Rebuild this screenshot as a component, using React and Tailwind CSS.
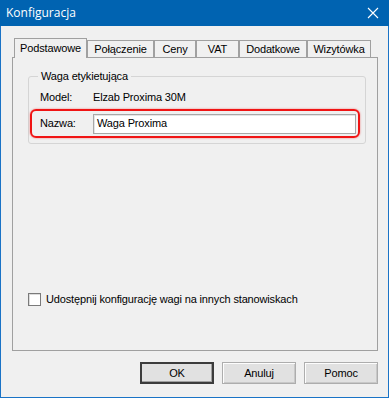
import React from "react";

const font = { fontFamily: '"Liberation Sans", Arial, sans-serif', letterSpacing: "-0.15px" };

function Tab({ label, w, selected }) {
  return (
    <div
      className={
        "flex items-center justify-center border border-b-0 border-[#a0a0a0] bg-[#f0f0f0] text-[11px] text-black " +
        (selected ? "h-[20px] relative z-10 -mb-px" : "h-[17px]")
      }
      style={{ width: w }}
    >
      {label}
    </div>
  );
}

function Button({ label, def }) {
  return (
    <div
      className={
        "flex h-[22px] w-[74px] items-center justify-center bg-[#e1e1e1] text-[11px] text-black " +
        (def
          ? "border-2 border-[#3c3c3c] shadow-[inset_-1px_-1px_0_#a0a0a0]"
          : "border border-[#adadad] shadow-[inset_1px_1px_0_#fdfdfd,inset_-1px_-1px_0_#c8c8c8]")
      }
    >
      {label}
    </div>
  );
}

export default function App() {
  return (
    <div className="h-[398px] w-[389px] bg-[#f0f0f0] border border-t-0 border-[#1a73c6] flex flex-col" style={font}>
      <div className="h-[26px] bg-[#0063b1] flex items-center justify-between pl-[6px] pr-[8px] -mx-px">
        <span className="text-white text-[12px] tracking-normal" style={{ fontFamily: '"Open Sans", "Noto Sans", sans-serif' }}>Konfiguracja</span>
        <svg width="12" height="12" viewBox="0 0 12 12" className="mr-[2px]">
          <path d="M1 1 L11 11 M11 1 L1 11" stroke="white" strokeWidth="1.1" />
        </svg>
      </div>
      <div className="pl-[11px] pr-[10px] pt-[12px] flex flex-col">
        <div className="flex items-end pl-[2px] h-[19px]">
          <Tab label="Podstawowe" w={73} selected />
          <Tab label="Połączenie" w={67} />
          <Tab label="Ceny" w={42} />
          <Tab label="VAT" w={43} />
          <Tab label="Dodatkowe" w={68} />
          <Tab label="Wizytówka" w={64} />
        </div>
        <div className="h-[294px] border border-[#a0a0a0] bg-[#f0f0f0] pt-[12px] pl-[15px] pr-[11px] flex flex-col">
          <div className="relative h-[68px] border border-[#d5d5d5] rounded-[3px] mt-[6px] text-[11px] text-black">
            <span className="absolute -top-[8px] left-[9px] bg-[#f0f0f0] px-[3px] leading-[14px]">Waga etykietująca</span>
            <div className="flex items-center h-[14px] mt-[13px] ml-[11px]">
              <span className="w-[53px]">Model:</span>
              <span>Elzab Proxima 30M</span>
            </div>
            <div className="flex items-center mt-[5px] ml-[1px] mr-[5px] h-[29px] border-[2px] border-[#f01414] rounded-[6px] shadow-[0_0_2px_rgba(240,20,20,0.6)]">
              <span className="w-[61px] pl-[8px]">Nazwa:</span>
              <div className="flex-1 mr-[2px] h-[20px] bg-white border border-[#a8a8a8] shadow-[inset_1px_1px_0_#e5e5e5] flex items-center pl-[3px] text-black">
                Waga Proxima
              </div>
            </div>
          </div>
          <div className="flex items-center mt-[147px] text-[11px] text-black">
            <div className="w-[13px] h-[13px] bg-white border border-[#7a7a7a] shadow-[inset_1px_1px_0_#dcdcdc]" />
            <span className="ml-[5px]">Udostępnij konfigurację wagi na innych stanowiskach</span>
          </div>
        </div>
        <div className="flex justify-end gap-[8px] mt-[11px] pr-0">
          <Button label="OK" def />
          <Button label="Anuluj" />
          <Button label="Pomoc" />
        </div>
      </div>
    </div>
  );
}
